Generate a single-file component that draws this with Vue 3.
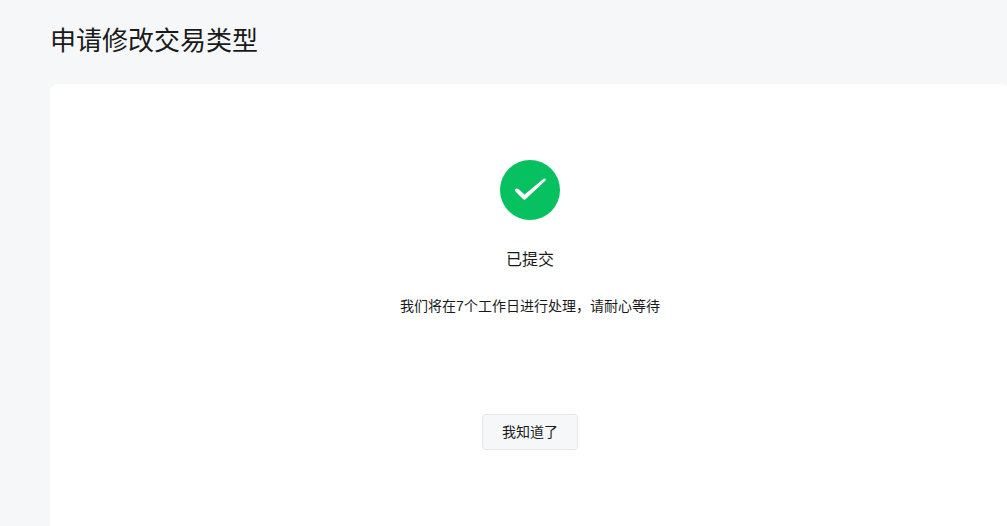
<script setup>
const title = '申请修改交易类型'
</script>

<template>
  <div class="page">
    <h1 class="title">{{ title }}</h1>
    <main class="card">
      <svg class="icon" width="60" height="60" viewBox="0 0 60 60">
        <circle cx="30" cy="30" r="30" fill="#07c160" />
        <path d="M15.5 29 Q14.4 30.4 15.5 31.6 L23 39 Q24.4 40.4 25.8 39 L45.6 20.6 Q46.3 19.4 45.2 18.6 Q44.4 18.2 43.6 18.8 L24.6 34.4 L18.4 29 Q16.8 27.8 15.5 29 Z" fill="#fff" />
      </svg>
      <div class="status">已提交</div>
      <p class="desc">我们将在7个工作日进行处理，请耐心等待</p>
      <button class="btn" type="button">我知道了</button>
    </main>
  </div>
</template>

<style>
html, body { margin: 0; overflow: hidden; background: #f6f7f9; }
</style>

<style scoped>
.page {
  width: 1007px;
  height: 526px;
  overflow: hidden;
  padding-left: 50px;
  box-sizing: border-box;
  background: #f6f7f9;
  font-family: "Liberation Sans", "Noto Sans CJK SC", sans-serif;
  color: #1a1a1a;
}
.title {
  margin: 0;
  height: 84px;
  box-sizing: border-box;
  padding-top: 23px;
  font-size: 26px;
  line-height: 36px;
  font-weight: 400;
}
.card {
  width: 960px;
  height: 520px;
  box-sizing: border-box;
  padding-top: 76px;
  display: flex;
  flex-direction: column;
  align-items: center;
  background: #fff;
  border-radius: 8px;
}
.icon { display: block; }
.status {
  margin-top: 28px;
  font-size: 16px;
  line-height: 24px;
}
.desc {
  margin: 24px 0 0;
  font-size: 14px;
  line-height: 20px;
}
.btn {
  margin-top: 98px;
  width: 96px;
  height: 36px;
  padding: 0 0 2px;
  font: inherit;
  font-size: 14px;
  color: #1a1a1a;
  background: #f6f7f9;
  border: 1px solid #e4e6e9;
  border-radius: 4px;
}
</style>
